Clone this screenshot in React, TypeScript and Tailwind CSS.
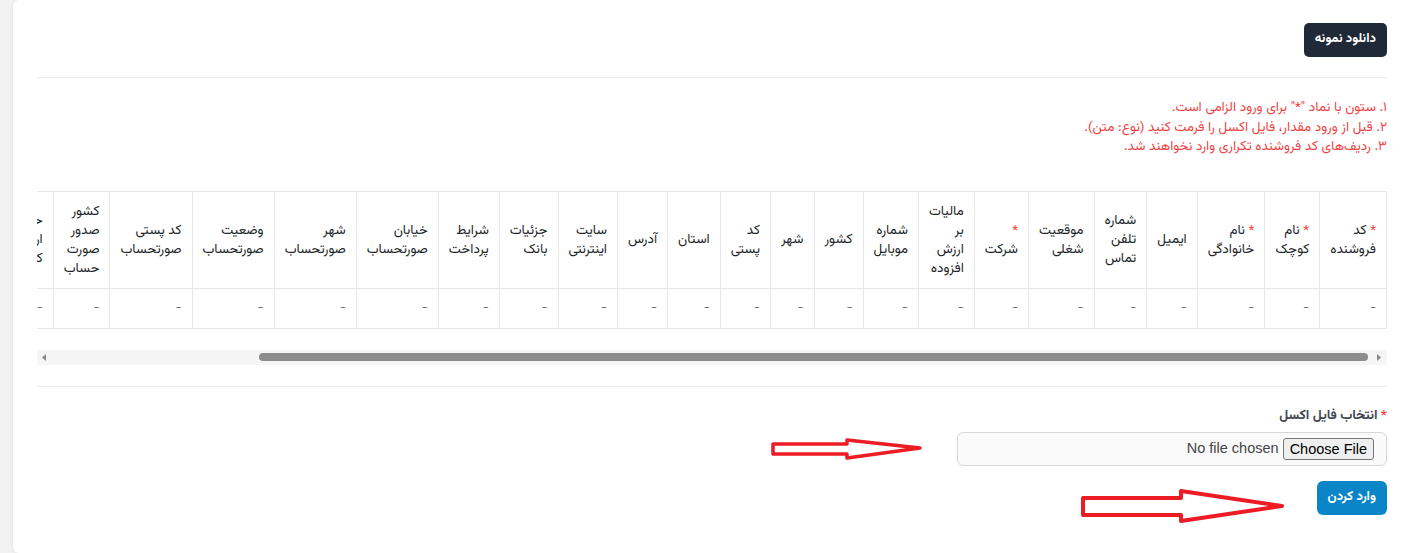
import type { ReactNode } from 'react';

const faFont = '[font-family:Vazirmatn,"Noto_Sans_Arabic","DejaVu_Sans",sans-serif]';

type Column = { label: string; required?: boolean };

const columns: Column[] = [
  { label: 'کد فروشنده', required: true },
  { label: 'نام کوچک', required: true },
  { label: 'نام خانوادگی', required: true },
  { label: 'ایمیل' },
  { label: 'شماره تلفن تماس' },
  { label: 'موقعیت شغلی' },
  { label: 'شرکت', required: true },
  { label: 'مالیات بر ارزش افزوده' },
  { label: 'شماره موبایل' },
  { label: 'کشور' },
  { label: 'شهر' },
  { label: 'کد پستی' },
  { label: 'استان' },
  { label: 'آدرس' },
  { label: 'سایت اینترنتی' },
  { label: 'جزئیات بانک' },
  { label: 'شرایط پرداخت' },
  { label: 'خیابان صورتحساب' },
  { label: 'شهر صورتحساب' },
  { label: 'وضعیت صورتحساب' },
  { label: 'کد پستی صورتحساب' },
  { label: 'کشور صدور صورت حساب' },
  { label: 'حداکثر ارزش کالا' },
  { label: 'واحد پول' },
  { label: 'توضیحات فروشنده' },
  { label: 'وضعیت' },
];

const notes = [
  '۱. ستون با نماد "*" برای ورود الزامی است.',
  '۲. قبل از ورود مقدار، فایل اکسل را فرمت کنید (نوع: متن).',
  '۳. ردیف‌های کد فروشنده تکراری وارد نخواهند شد.',
];

function Star() {
  return <span className="text-[#ef4444]">*</span>;
}

function HeaderCell({ children }: { children: ReactNode }) {
  return (
    <th className="border border-[#e5e7eb] px-[10px] py-[10px] text-right align-middle font-normal text-[13.5px] leading-[19px] text-[#212529]">
      {children}
    </th>
  );
}

function FakeScrollbar() {
  return (
    <div dir="ltr" className="mt-[21px] flex h-[15px] items-center bg-[#f5f5f5]">
      <svg width="14" height="15" viewBox="0 0 14 15" className="shrink-0">
        <path d="M5 7.5 L9 4 L9 11 Z" fill="#8a8a8a" />
      </svg>
      <div className="flex flex-1 justify-end">
        <div className="h-[8px] w-[1109px] rounded-full bg-[#8c8c8c]" />
      </div>
      <svg width="19" height="15" viewBox="0 0 19 15" className="shrink-0">
        <path d="M9 4 L13 7.5 L9 11 Z" fill="#8a8a8a" />
      </svg>
    </div>
  );
}

function RedArrowSmall() {
  return (
    <svg width="154" height="24" viewBox="0 0 154 24" className="pointer-events-none absolute left-[758px] top-[438px]">
      <path
        d="M2 6 L76 6 L76 2 L149 10 L76 20 L76 16 L2 16 Z"
        fill="none"
        stroke="#ed1c24"
        strokeWidth="3.5"
        strokeLinejoin="round"
      />
    </svg>
  );
}

function RedArrowLarge() {
  return (
    <svg width="208" height="38" viewBox="0 0 208 38" className="pointer-events-none absolute left-[1067px] top-[488px]">
      <path
        d="M3 10 L101 10 L101 3 L202 18 L101 33 L101 27 L3 27 Z"
        fill="none"
        stroke="#ed1c24"
        strokeWidth="4"
        strokeLinejoin="round"
      />
    </svg>
  );
}

export default function App() {
  return (
    <div className="h-[553px] overflow-hidden bg-[#f2f2f2] pl-[13px]">
      <div
        dir="rtl"
        className={`relative h-[553px] rounded-tl-[6px] rounded-bl-[6px] bg-white pl-[24px] pr-[20px] shadow-[0_0_4px_rgba(0,0,0,0.08)] ${faFont}`}
      >
        <div className="flex border-b border-[#ececec] pt-[23px] pb-[20px]">
          <button className="h-[34px] rounded-[5px] bg-[#1f2937] px-[11px] text-[13px] font-bold text-white">
            دانلود نمونه
          </button>
        </div>

        <div className="mt-[20px] text-[13.5px] leading-[19.5px] text-[#ef4444]">
          {notes.map((n) => (
            <div key={n}>{n}</div>
          ))}
        </div>

        <div className="mt-[34px] overflow-hidden">
          <table className="border-collapse">
            <thead>
              <tr>
                {columns.map((c) => (
                  <HeaderCell key={c.label}>
                    {c.required && (
                      <>
                        <Star />{' '}
                      </>
                    )}
                    {c.label}
                  </HeaderCell>
                ))}
              </tr>
            </thead>
            <tbody>
              <tr>
                {columns.map((c) => (
                  <td
                    key={c.label}
                    className="border border-[#e5e7eb] px-[10px] py-[10px] text-right text-[13px] leading-[19px] text-[#6b7280]"
                  >
                    -
                  </td>
                ))}
              </tr>
            </tbody>
          </table>
        </div>

        <FakeScrollbar />

        <div className="mt-[21px] border-t border-[#ececec] pt-[19px]">
          <label className="block text-[13.5px] font-bold leading-[19px] text-[#3f4651]">
            <Star /> انتخاب فایل اکسل
          </label>
          <div className="mt-[7px] flex h-[34px] w-[430px] items-center gap-[4px] rounded-[6px] border border-[#d4d7dc] bg-[#fafafa] px-[12px] font-['Liberation_Sans',Arial,sans-serif] text-[14.5px] text-[#444]">
            <span className="rounded-[3px] border border-[#767676] bg-[#efefef] px-[6px] leading-[20px] text-black">
              Choose File
            </span>
            <span>No file chosen</span>
          </div>
          <button className="mt-[15px] h-[34px] rounded-[6px] bg-[#0a85c7] px-[11px] text-[13px] font-bold text-white">
            وارد کردن
          </button>
        </div>

        <RedArrowSmall />
        <RedArrowLarge />
      </div>
    </div>
  );
}
